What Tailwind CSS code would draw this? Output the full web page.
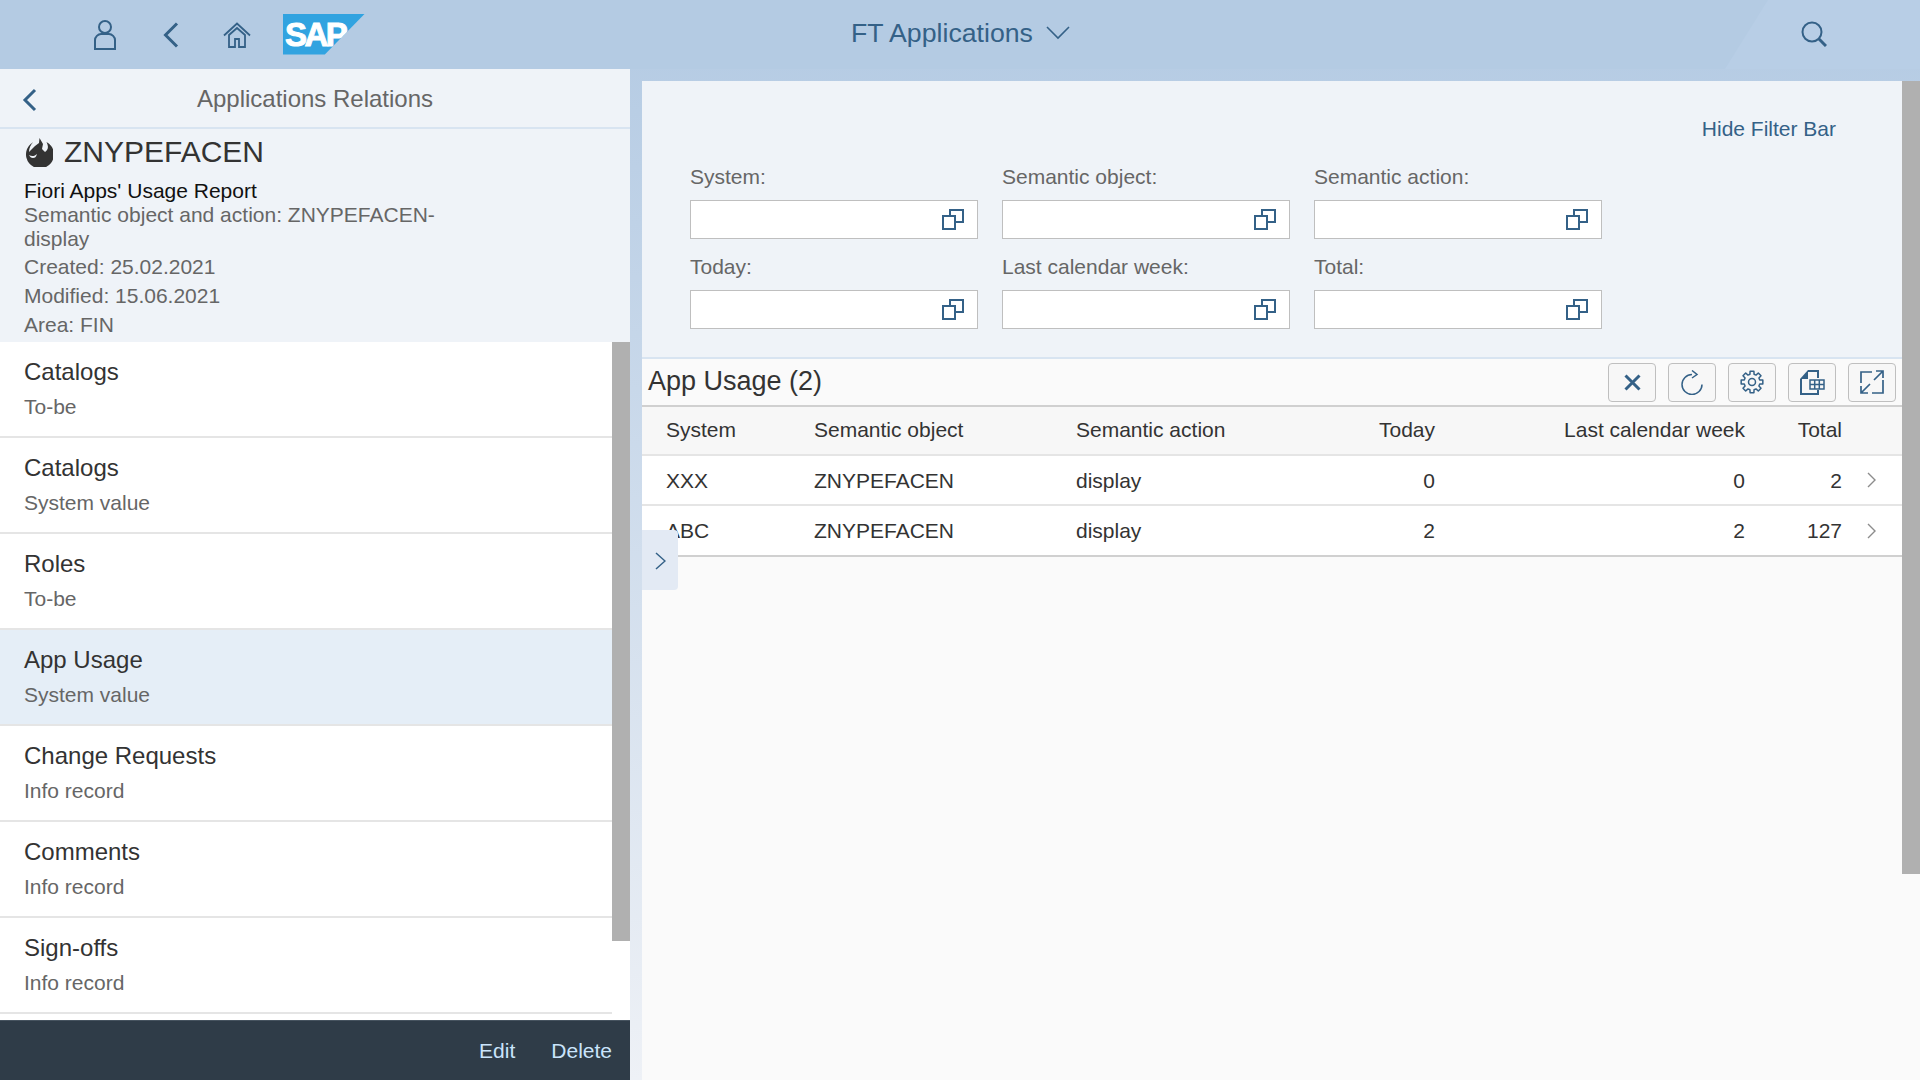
<!DOCTYPE html>
<html lang="en">
<head>
    <meta charset="UTF-8">
    <meta name="viewport" content="width=device-width, initial-scale=1.0">
    <title>FT Applications</title>
    <script src="https://cdn.jsdelivr.net/npm/@tailwindcss/browser@4"></script>
</head>
<body class="h-[1080px] w-[1920px] overflow-hidden font-['Liberation_Sans',Arial,sans-serif] text-[#333] bg-gradient-to-b from-[#b3cae3] to-[#eef1f6]">
    <!-- shell header -->
    <header class="relative h-[69px] bg-[#b4cbe3] flex items-center text-[#346187]">
        <div class="absolute top-0 bottom-0 right-0 w-[195px] bg-[#b8cee6] [clip-path:polygon(43px_0,100%_0,100%_100%,0_100%)]"></div>
        <div class="relative flex items-center pl-[92px] w-[700px]">
            <svg class="w-[26px] h-[32px]" viewBox="0 0 26 32" fill="none" stroke="#346187" stroke-width="2"><circle cx="13" cy="8" r="6"/><path d="M3 30V21c0-3 3-6 6-6h8c3 0 6 3 6 6v9z"/></svg>
            <svg class="w-[18px] h-[26px] ml-[44px]" viewBox="0 0 18 26" fill="none" stroke="#346187" stroke-width="3"><path d="M15 1.500L3.500 13 15 24.500"/></svg>
            <svg class="w-[28px] h-[26px] ml-[43px]" viewBox="0 0 28 26" fill="none" stroke="#346187" stroke-width="1.800"><path d="M1 13.500L14 1.500l13 12"/><path d="M6 13v12h6v-8h4v8h6V13l-8-7z"/></svg>
            <div class="relative w-[82px] h-[41px] ml-[32px] -mt-[1px] bg-[#31a3e0] [clip-path:polygon(0_0,100%_0,51%_100%,0_100%)]">
                <span class="absolute left-[2px] top-[4px] text-[33px] leading-[34px] font-bold tracking-[-2.5px] text-white [-webkit-text-stroke:1px_white]">SAP</span>
            </div>
        </div>
        <div class="relative flex items-center ml-[151px] pb-[2px] text-[26.7px]">
            FT Applications
            <svg class="w-[24px] h-[14px] ml-[13px]" viewBox="0 0 24 14" fill="none" stroke="#346187" stroke-width="1.600"><path d="M1 1l11 11L23 1"/></svg>
        </div>
        <svg class="absolute right-[93px] top-[21px] w-[26px] h-[26px]" viewBox="0 0 26 26" fill="none" stroke="#346187" stroke-width="2"><circle cx="11" cy="11" r="9.500"/><path d="M18 18l7 7" stroke-width="3"/></svg>
    </header>

    <div class="flex h-[1011px]">
        <!-- master list -->
        <aside class="relative w-[630px] h-full bg-white flex flex-col shrink-0">
            <div class="relative h-[60px] bg-[#eff3f8] border-b-2 border-[#d8e4f1] flex items-center justify-center pt-[2px] text-[24px] text-[#666]">
                <svg class="absolute left-[22px] top-[19px] w-[15px] h-[24px]" viewBox="0 0 15 24" fill="none" stroke="#346187" stroke-width="3"><path d="M13 2L3 12l10 10"/></svg>
                Applications Relations
            </div>
            <div class="h-[213px] bg-[#eff3f8] pl-[24px] relative">
                <div class="flex items-center h-[44px] pt-[1px]">
                    <svg class="w-[29px] h-[30px]" viewBox="0 0 29 30"><path d="M9.500 5A14 14 0 1 0 22.500 5C25 10 24 13 21 15L18 12 19 7 15.500 1 15 6 11 9C9 11 7 13 5 15 5 11 7 7 9.500 5Z" fill="#333"/><path d="M5 18c3 2 6 1 8-1-1 3-2 4-4 4-2 0-3-1-4-3z" fill="#eff3f8"/></svg>
                    <span class="ml-[11px] text-[30px] leading-[34px]">ZNYPEFACEN</span>
                </div>
                <div class="text-[21px] leading-[25px] mt-[5px] text-[#111]">Fiori Apps' Usage Report</div>
                <div class="text-[21px] leading-[24px] text-[#666] w-[430px]">Semantic object and action: ZNYPEFACEN-display</div>
                <div class="text-[21px] leading-[29px] mt-[1px] text-[#666]">Created: 25.02.2021</div>
                <div class="text-[21px] leading-[29px] text-[#666]">Modified: 15.06.2021</div>
                <div class="text-[21px] leading-[29px] text-[#666]">Area: FIN</div>
            </div>
            <ul class="flex-1 pr-[18px]">
                <li class="h-[96px] px-[24px] pt-[14px] border-b-2 border-[#e5e5e5]"><div class="text-[24px] leading-[32px]">Catalogs</div><div class="text-[21px] leading-[28px] mt-[5px] text-[#666]">To-be</div></li>
                <li class="h-[96px] px-[24px] pt-[14px] border-b-2 border-[#e5e5e5]"><div class="text-[24px] leading-[32px]">Catalogs</div><div class="text-[21px] leading-[28px] mt-[5px] text-[#666]">System value</div></li>
                <li class="h-[96px] px-[24px] pt-[14px] border-b-2 border-[#e5e5e5]"><div class="text-[24px] leading-[32px]">Roles</div><div class="text-[21px] leading-[28px] mt-[5px] text-[#666]">To-be</div></li>
                <li class="h-[96px] px-[24px] pt-[14px] border-b-2 border-[#e5e5e5] bg-[#e5eef7]"><div class="text-[24px] leading-[32px]">App Usage</div><div class="text-[21px] leading-[28px] mt-[5px] text-[#666]">System value</div></li>
                <li class="h-[96px] px-[24px] pt-[14px] border-b-2 border-[#e5e5e5]"><div class="text-[24px] leading-[32px]">Change Requests</div><div class="text-[21px] leading-[28px] mt-[5px] text-[#666]">Info record</div></li>
                <li class="h-[96px] px-[24px] pt-[14px] border-b-2 border-[#e5e5e5]"><div class="text-[24px] leading-[32px]">Comments</div><div class="text-[21px] leading-[28px] mt-[5px] text-[#666]">Info record</div></li>
                <li class="h-[96px] px-[24px] pt-[14px] border-b-2 border-[#e5e5e5]"><div class="text-[24px] leading-[32px]">Sign-offs</div><div class="text-[21px] leading-[28px] mt-[5px] text-[#666]">Info record</div></li>
            </ul>
            <div class="absolute right-0 top-[273px] w-[18px] h-[599px] bg-[#b0b0b0]"></div>
            <div class="h-[60px] bg-[#2f3c48] flex items-center justify-end text-[21px] text-[#cae4fb] gap-[36px] pr-[18px] border-t border-[#46535f]">
                <span>Edit</span><span>Delete</span>
            </div>
        </aside>

        <!-- detail -->
        <main class="relative ml-[12px] flex-1 mt-[12px] bg-[#fafafa] flex flex-col">
            <div class="h-[278px] bg-[#eff3f8] relative pl-[48px] border-b-2 border-[#d8e4f1]">
                <div class="absolute top-[36px] right-[84px] text-[21px] leading-[24px] text-[#346187]">Hide Filter Bar</div>
                <div class="grid grid-cols-[288px_288px_288px] gap-x-[24px] pt-[82px]">
                    <div class="h-[73px]"><label class="block text-[21px] leading-[24px] pt-[2px] text-[#666] h-[37px]">System:</label>
                        <div class="h-[39px] bg-white border border-[#bfbfbf] flex items-center justify-end pr-[13px]"><svg class="w-[22px] h-[21px]" viewBox="0 0 22 21" fill="none" stroke="#346187" stroke-width="2"><rect x="1" y="7" width="12" height="13"/><path d="M8 6V1h13v12h-7"/></svg></div></div>
                    <div class="h-[73px]"><label class="block text-[21px] leading-[24px] pt-[2px] text-[#666] h-[37px]">Semantic object:</label>
                        <div class="h-[39px] bg-white border border-[#bfbfbf] flex items-center justify-end pr-[13px]"><svg class="w-[22px] h-[21px]" viewBox="0 0 22 21" fill="none" stroke="#346187" stroke-width="2"><rect x="1" y="7" width="12" height="13"/><path d="M8 6V1h13v12h-7"/></svg></div></div>
                    <div class="h-[73px]"><label class="block text-[21px] leading-[24px] pt-[2px] text-[#666] h-[37px]">Semantic action:</label>
                        <div class="h-[39px] bg-white border border-[#bfbfbf] flex items-center justify-end pr-[13px]"><svg class="w-[22px] h-[21px]" viewBox="0 0 22 21" fill="none" stroke="#346187" stroke-width="2"><rect x="1" y="7" width="12" height="13"/><path d="M8 6V1h13v12h-7"/></svg></div></div>
                    <div class="h-[73px] mt-[17px]"><label class="block text-[21px] leading-[24px] pt-[2px] text-[#666] h-[37px]">Today:</label>
                        <div class="h-[39px] bg-white border border-[#bfbfbf] flex items-center justify-end pr-[13px]"><svg class="w-[22px] h-[21px]" viewBox="0 0 22 21" fill="none" stroke="#346187" stroke-width="2"><rect x="1" y="7" width="12" height="13"/><path d="M8 6V1h13v12h-7"/></svg></div></div>
                    <div class="h-[73px] mt-[17px]"><label class="block text-[21px] leading-[24px] pt-[2px] text-[#666] h-[37px]">Last calendar week:</label>
                        <div class="h-[39px] bg-white border border-[#bfbfbf] flex items-center justify-end pr-[13px]"><svg class="w-[22px] h-[21px]" viewBox="0 0 22 21" fill="none" stroke="#346187" stroke-width="2"><rect x="1" y="7" width="12" height="13"/><path d="M8 6V1h13v12h-7"/></svg></div></div>
                    <div class="h-[73px] mt-[17px]"><label class="block text-[21px] leading-[24px] pt-[2px] text-[#666] h-[37px]">Total:</label>
                        <div class="h-[39px] bg-white border border-[#bfbfbf] flex items-center justify-end pr-[13px]"><svg class="w-[22px] h-[21px]" viewBox="0 0 22 21" fill="none" stroke="#346187" stroke-width="2"><rect x="1" y="7" width="12" height="13"/><path d="M8 6V1h13v12h-7"/></svg></div></div>
                </div>
            </div>

            <div class="h-[48px] flex items-center justify-between pl-[6px] pr-[24px] border-b-2 border-[#d0d0d0]">
                <span class="text-[27px] pb-[2px]">App Usage (2)</span>
                <div class="flex gap-[12px]">
                    <button class="w-[48px] h-[39px] flex items-center justify-center rounded-[4px] border border-[#bfbfbf] bg-[#f7f7f7]"><svg class="w-[17px] h-[17px]" viewBox="0 0 17 17" fill="none" stroke="#346187" stroke-width="3"><path d="M1.500 1.500l14 14M15.500 1.500l-14 14"/></svg></button>
                    <button class="w-[48px] h-[39px] flex items-center justify-center rounded-[4px] border border-[#bfbfbf] bg-[#f7f7f7]"><svg class="w-[22px] h-[25px]" viewBox="0 0 22 25" fill="none" stroke="#346187" stroke-width="1.500"><path d="M11 4.500A10 10 0 1 0 21 14.500"/><path d="M11 .5l5 4-5 3.500"/></svg></button>
                    <button class="w-[48px] h-[39px] flex items-center justify-center rounded-[4px] border border-[#bfbfbf] bg-[#f7f7f7]"><svg class="w-[24px] h-[24px]" viewBox="0 0 24 24" fill="none" stroke="#346187" stroke-width="1.500" stroke-linejoin="round"><circle cx="12" cy="12" r="3.500"/><path d="M14.070 4.270L13.910 1.170H10.090L9.930 4.270 8 5.070 5.690 2.990 2.990 5.690 5.070 8 4.270 9.930 1.170 10.090V13.910L4.270 14.070 5.070 16 2.990 18.310 5.690 21.010 8 18.930 9.930 19.730 10.090 22.830H13.910L14.070 19.730 16 18.930 18.310 21.010 21.010 18.310 18.930 16 19.730 14.070 22.830 13.910V10.090L19.730 9.930 18.930 8 21.010 5.690 18.310 2.990 16 5.070Z"/></svg></button>
                    <button class="w-[48px] h-[39px] flex items-center justify-center rounded-[4px] border border-[#bfbfbf] bg-[#f7f7f7]"><svg class="w-[25px] h-[25px]" viewBox="0 0 25 25" fill="none" stroke="#346187" stroke-width="2"><path d="M8 1h10v7M1 9v15h17v-4"/><path d="M8 0v9H0z" fill="#346187" stroke="none"/><rect x="10" y="10" width="14" height="9" stroke-width="1.500" fill="#f7f7f7"/><path d="M14.700 10v9M19.300 10v9M10 14.500h14" stroke-width="1.500"/></svg></button>
                    <button class="w-[48px] h-[39px] flex items-center justify-center rounded-[4px] border border-[#bfbfbf] bg-[#f7f7f7]"><svg class="w-[24px] h-[24px]" viewBox="0 0 24 24" fill="none" stroke="#346187" stroke-width="1.700"><path d="M1 13V2h11M23 10v13H12M23 1l-9 9M16 1h7v7M1 23l9-9M1 16v7h7"/></svg></button>
                </div>
            </div>

            <table class="w-[1260px] table-fixed text-[21px] border-b-2 border-[#d0d0d0] bg-white">
                <thead class="bg-[#f7f7f7]">
                    <tr class="h-[48px] border-b-2 border-[#e5e5e5] text-left font-normal">
                        <th class="font-normal pb-[2px] pl-[24px] w-[172px]">System</th>
                        <th class="font-normal pb-[2px] w-[262px]">Semantic object</th>
                        <th class="font-normal pb-[2px] w-[180px]">Semantic action</th>
                        <th class="font-normal pb-[2px] text-right w-[179px]">Today</th>
                        <th class="font-normal pb-[2px] text-right w-[310px]">Last calendar week</th>
                        <th class="font-normal pb-[2px] text-right w-[97px]">Total</th>
                        <th></th>
                    </tr>
                </thead>
                <tbody>
                    <tr class="h-[50px] border-b-2 border-[#e5e5e5]">
                        <td class="pl-[24px] pt-[1px]">XXX</td><td class="pt-[1px]">ZNYPEFACEN</td><td class="pt-[1px]">display</td><td class="text-right pt-[1px]">0</td><td class="text-right pt-[1px]">0</td><td class="text-right pt-[1px]">2</td>
                        <td class="pl-[25px]"><svg class="w-[9px] h-[16px]" viewBox="0 0 9 16" fill="none" stroke="#8c8c8c" stroke-width="1.400"><path d="M1 1l7 7-7 7"/></svg></td>
                    </tr>
                    <tr class="h-[51px]">
                        <td class="pl-[24px] pt-[1px]">ABC</td><td class="pt-[1px]">ZNYPEFACEN</td><td class="pt-[1px]">display</td><td class="text-right pt-[1px]">2</td><td class="text-right pt-[1px]">2</td><td class="text-right pt-[1px]">127</td>
                        <td class="pl-[25px]"><svg class="w-[9px] h-[16px]" viewBox="0 0 9 16" fill="none" stroke="#8c8c8c" stroke-width="1.400"><path d="M1 1l7 7-7 7"/></svg></td>
                    </tr>
                </tbody>
            </table>

            <div class="absolute left-0 top-[449px] w-[36px] h-[60px] bg-[#e3eaf4] rounded-r-[4px] flex items-center justify-center pt-[1px]">
                <svg class="w-[11px] h-[18px]" viewBox="0 0 11 18" fill="none" stroke="#346187" stroke-width="1.500"><path d="M1 1l9 8-9 8"/></svg>
            </div>
            <div class="absolute right-0 top-0 w-[18px] h-[793px] bg-[#b0b0b0]"></div>
        </main>
    </div>
</body>
</html>
